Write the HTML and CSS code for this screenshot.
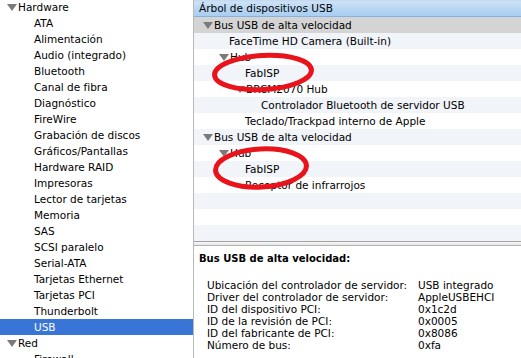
FILE: index.html
```html
<!DOCTYPE html>
<html lang="es">
<head>
<meta charset="utf-8">
<title>Información del sistema</title>
<link rel="stylesheet" href="styles.css">
</head>
<body>
<div class="window">
  <aside class="sidebar">
    <div class="list">
      <div class="srow group"><span class="tri"></span>Hardware</div>
      <div class="srow item">ATA</div>
      <div class="srow item">Alimentación</div>
      <div class="srow item">Audio (integrado)</div>
      <div class="srow item">Bluetooth</div>
      <div class="srow item">Canal de fibra</div>
      <div class="srow item">Diagnóstico</div>
      <div class="srow item">FireWire</div>
      <div class="srow item">Grabación de discos</div>
      <div class="srow item">Gráficos/Pantallas</div>
      <div class="srow item">Hardware RAID</div>
      <div class="srow item">Impresoras</div>
      <div class="srow item">Lector de tarjetas</div>
      <div class="srow item">Memoria</div>
      <div class="srow item">SAS</div>
      <div class="srow item">SCSI paralelo</div>
      <div class="srow item">Serial-ATA</div>
      <div class="srow item">Tarjetas Ethernet</div>
      <div class="srow item">Tarjetas PCI</div>
      <div class="srow item">Thunderbolt</div>
      <div class="srow item selected">USB</div>
      <div class="srow group"><span class="tri"></span>Red</div>
      <div class="srow item">Firewall</div>
    </div>
  </aside>
  <main class="main">
    <section class="tree">
      <div class="tree-header">Árbol de dispositivos USB</div>
      <div class="rows">
        <div class="trow sel t0"><span class="tri"></span>Bus USB de alta velocidad</div>
        <div class="trow l1">FaceTime HD Camera (Built-in)</div>
        <div class="trow t1"><span class="tri"></span>Hub</div>
        <div class="trow l2">FabISP</div>
        <div class="trow t2"><span class="tri"></span>BRCM2070 Hub</div>
        <div class="trow l3">Controlador Bluetooth de servidor USB</div>
        <div class="trow l2">Teclado/Trackpad interno de Apple</div>
        <div class="trow t0"><span class="tri"></span>Bus USB de alta velocidad</div>
        <div class="trow t1"><span class="tri"></span>Hub</div>
        <div class="trow l2">FabISP</div>
        <div class="trow l2">Receptor de infrarrojos</div>
        <div class="trow"></div>
        <div class="trow"></div>
        <div class="trow"></div>
      </div>
    </section>
    <div class="splitter"></div>
    <section class="details">
      <div class="title">Bus USB de alta velocidad:</div>
      <div class="props">
        <span>Ubicación del controlador de servidor:</span><span>USB integrado</span>
        <span>Driver del controlador de servidor:</span><span>AppleUSBEHCI</span>
        <span>ID del dispositivo PCI:</span><span>0x1c2d</span>
        <span>ID de la revisión de PCI:</span><span>0x0005</span>
        <span>ID del fabricante de PCI:</span><span>0x8086</span>
        <span>Número de bus:</span><span>0xfa</span>
      </div>
    </section>
  </main>
  <svg class="marks" width="521" height="358" viewBox="0 0 521 358">
    <ellipse cx="263" cy="72.5" rx="48.5" ry="17" transform="rotate(-3 263 72.5)" fill="none" stroke="#e8131b" stroke-width="5"/>
    <ellipse cx="261" cy="168" rx="45.5" ry="19" transform="rotate(-3 261 168)" fill="none" stroke="#e8131b" stroke-width="5"/>
  </svg>
</div>
</body>
</html>
```
FILE: styles.css
```css
html, body {
  margin: 0;
  padding: 0;
  background: #ffffff;
}

body {
  font-family: "DejaVu Sans", "Liberation Sans", sans-serif;
  font-size: 10.5px;
  color: #000;
  overflow: hidden;
}

.window {
  position: relative;
  display: flex;
  width: 521px;
  height: 358px;
  overflow: hidden;
}

/* Sidebar */
.sidebar {
  width: 193px;
  flex: 0 0 193px;
  border-right: 1px solid #b9b9b9;
  background: #fff;
  overflow: hidden;
}

.list {
  margin-top: -1px;
}

.srow {
  height: 16px;
  line-height: 16px;
  white-space: nowrap;
  display: flex;
  align-items: center;
}

.srow.group {
  padding-left: 7px;
}

.srow.item {
  padding-left: 34px;
}

.srow.selected {
  background: #3875d7;
  color: #fff;
}

.tri {
  display: inline-block;
  width: 0;
  height: 0;
  border-left: 5px solid transparent;
  border-right: 5px solid transparent;
  border-top: 7px solid #7a7a7a;
  margin-right: 1px;
  flex: 0 0 auto;
}

/* Main */
.main {
  flex: 1;
  display: flex;
  flex-direction: column;
  min-width: 0;
}

.tree {
  flex: 0 0 auto;
}

.tree-header {
  height: 16px;
  line-height: 16px;
  padding-left: 5px;
  border-bottom: 1px solid #86b3de;
  background: linear-gradient(#c0d8f0 0px, #cde1f5 2px, #b7d6f3 9px, #a9cef2 16px);
  white-space: nowrap;
}

.trow {
  height: 16px;
  line-height: 16px;
  display: flex;
  align-items: center;
  white-space: nowrap;
  background: #fff;
}

.trow:nth-child(even) {
  background: #f1f4f9;
}

.trow.sel {
  background: #d4d4d4;
}

.trow.t0 { padding-left: 9px; }
.trow.l1 { padding-left: 35px; }
.trow.t1 { padding-left: 25px; }
.trow.l2 { padding-left: 51px; }
.trow.t2 { padding-left: 41px; }
.trow.l3 { padding-left: 67px; }

.splitter {
  height: 3px;
  border-top: 1px solid #a3a3a3;
  border-bottom: 1px solid #b3b3b3;
  background: linear-gradient(#f7f7f7, #e6e6e6);
}

.details {
  flex: 1;
  background: #fff;
  padding-top: 6px;
}

.title {
  font-weight: bold;
  font-size: 10px;
  line-height: 14px;
  padding-left: 5px;
  white-space: nowrap;
}

.props {
  display: grid;
  grid-template-columns: 211px auto;
  margin-top: 13px;
  padding-left: 13px;
  line-height: 12px;
  white-space: nowrap;
}

.marks {
  position: absolute;
  left: 0;
  top: 0;
  pointer-events: none;
}
```
